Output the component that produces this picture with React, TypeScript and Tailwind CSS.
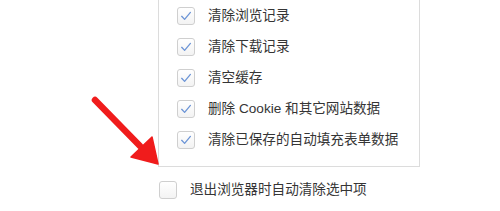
import React from "react";

function Box({ checked }: { checked: boolean }) {
  return (
    <div className="w-[18px] h-[18px] shrink-0 rounded-[3px] border border-[#cfcfcf] bg-gradient-to-b from-white to-[#f3f3f3] flex items-center justify-center">
      {checked && (
        <svg width="14" height="14" viewBox="0 0 13 13" fill="none">
          <path d="M2.5 6.8 L5.2 9.6 L10.6 3.2" stroke="#6b94d6" strokeWidth="1.2" strokeLinecap="round" strokeLinejoin="round" />
        </svg>
      )}
    </div>
  );
}

const items = ["清除浏览记录", "清除下载记录", "清空缓存", "删除 Cookie 和其它网站数据", "清除已保存的自动填充表单数据"];

export default function App() {
  return (
    <div
      className="relative w-[500px] h-[211px] bg-white overflow-hidden text-[#353535] text-[13.6px]"
      style={{ fontFamily: '"Liberation Sans", "Noto Sans CJK SC", sans-serif' }}
    >
      <div className="ml-[158px] w-[262px] border-l border-r border-b border-[#dcdcdc] pb-[11px]">
        {items.map((t) => (
          <div key={t} className="h-[31px] flex items-center pl-[18px] gap-[13px]">
            <Box checked />
            <span className="leading-none whitespace-nowrap">{t}</span>
          </div>
        ))}
      </div>
      <div className="ml-[159px] mt-[7px] h-[32px] flex items-center gap-[13px]">
        <Box checked={false} />
        <span className="leading-none whitespace-nowrap">退出浏览器时自动清除选中项</span>
      </div>
      <svg className="absolute left-0 top-0 pointer-events-none" width="500" height="211" viewBox="0 0 500 211">
        <line x1="95" y1="100" x2="140" y2="146" stroke="#f01c1c" strokeWidth="6.5" strokeLinecap="round" />
        <path d="M158 164 L152 137 L131 157 Z" fill="#f01c1c" stroke="#f01c1c" strokeWidth="1.5" strokeLinejoin="round" />
      </svg>
    </div>
  );
}
